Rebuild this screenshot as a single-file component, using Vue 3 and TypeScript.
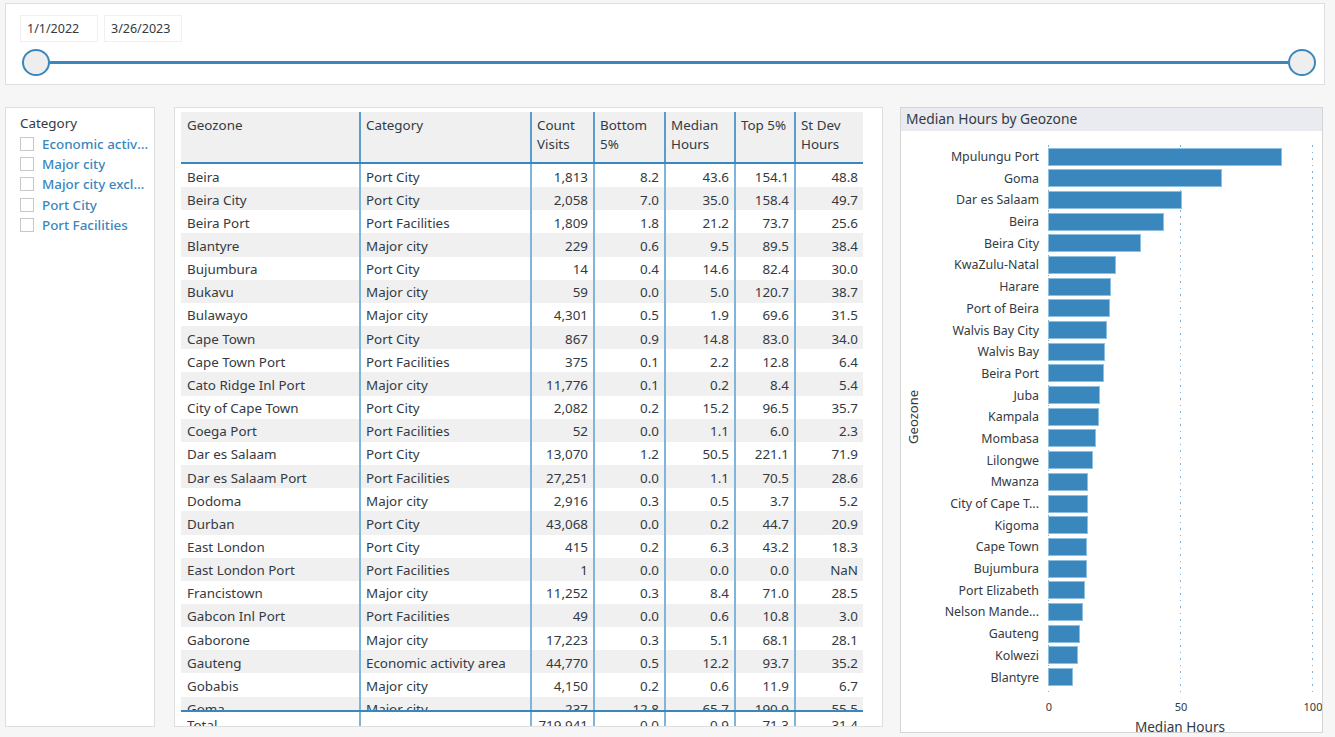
<script setup lang="ts">
const categories = ['Economic activity area', 'Major city', 'Major city excluding port', 'Port City', 'Port Facilities']

const columns = [
  { label: 'Geozone', num: false },
  { label: 'Category', num: false },
  { label: 'Count Visits', num: true },
  { label: 'Bottom 5%', num: true },
  { label: 'Median Hours', num: true },
  { label: 'Top 5%', num: true },
  { label: 'St Dev Hours', num: true },
]

const rows: string[][] = [
  ['Beira', 'Port City', '1,813', '8.2', '43.6', '154.1', '48.8'],
  ['Beira City', 'Port City', '2,058', '7.0', '35.0', '158.4', '49.7'],
  ['Beira Port', 'Port Facilities', '1,809', '1.8', '21.2', '73.7', '25.6'],
  ['Blantyre', 'Major city', '229', '0.6', '9.5', '89.5', '38.4'],
  ['Bujumbura', 'Port City', '14', '0.4', '14.6', '82.4', '30.0'],
  ['Bukavu', 'Major city', '59', '0.0', '5.0', '120.7', '38.7'],
  ['Bulawayo', 'Major city', '4,301', '0.5', '1.9', '69.6', '31.5'],
  ['Cape Town', 'Port City', '867', '0.9', '14.8', '83.0', '34.0'],
  ['Cape Town Port', 'Port Facilities', '375', '0.1', '2.2', '12.8', '6.4'],
  ['Cato Ridge Inl Port', 'Major city', '11,776', '0.1', '0.2', '8.4', '5.4'],
  ['City of Cape Town', 'Port City', '2,082', '0.2', '15.2', '96.5', '35.7'],
  ['Coega Port', 'Port Facilities', '52', '0.0', '1.1', '6.0', '2.3'],
  ['Dar es Salaam', 'Port City', '13,070', '1.2', '50.5', '221.1', '71.9'],
  ['Dar es Salaam Port', 'Port Facilities', '27,251', '0.0', '1.1', '70.5', '28.6'],
  ['Dodoma', 'Major city', '2,916', '0.3', '0.5', '3.7', '5.2'],
  ['Durban', 'Port City', '43,068', '0.0', '0.2', '44.7', '20.9'],
  ['East London', 'Port City', '415', '0.2', '6.3', '43.2', '18.3'],
  ['East London Port', 'Port Facilities', '1', '0.0', '0.0', '0.0', 'NaN'],
  ['Francistown', 'Major city', '11,252', '0.3', '8.4', '71.0', '28.5'],
  ['Gabcon Inl Port', 'Port Facilities', '49', '0.0', '0.6', '10.8', '3.0'],
  ['Gaborone', 'Major city', '17,223', '0.3', '5.1', '68.1', '28.1'],
  ['Gauteng', 'Economic activity area', '44,770', '0.5', '12.2', '93.7', '35.2'],
  ['Gobabis', 'Major city', '4,150', '0.2', '0.6', '11.9', '6.7'],
  ['Goma', 'Major city', '237', '12.8', '65.7', '190.9', '55.5'],
]

const totals = ['Total', '', '719,941', '0.0', '0.9', '71.3', '31.4']

// bar lengths are in hours, 100 h = 265px on the axis
const bars: [string, number][] = [
  ['Mpulungu Port', 88.4],
  ['Goma', 65.7],
  ['Dar es Salaam', 50.5],
  ['Beira', 43.6],
  ['Beira City', 35.0],
  ['KwaZulu-Natal', 25.5],
  ['Harare', 23.6],
  ['Port of Beira', 23.4],
  ['Walvis Bay City', 22.3],
  ['Walvis Bay', 21.4],
  ['Beira Port', 21.2],
  ['Juba', 19.6],
  ['Kampala', 19.2],
  ['Mombasa', 18.1],
  ['Lilongwe', 17.0],
  ['Mwanza', 15.2],
  ['City of Cape T...', 15.2],
  ['Kigoma', 15.0],
  ['Cape Town', 14.8],
  ['Bujumbura', 14.6],
  ['Port Elizabeth', 14.0],
  ['Nelson Mande...', 13.2],
  ['Gauteng', 12.2],
  ['Kolwezi', 11.4],
  ['Blantyre', 9.5],
]
</script>

<template>
  <div class="page">
    <section class="card slicer">
      <div class="dates">
        <div class="date">1/1/2022</div>
        <div class="date">3/26/2023</div>
      </div>
      <div class="track">
        <span class="handle"></span>
        <span class="line"></span>
        <span class="handle"></span>
      </div>
    </section>

    <div class="main">
      <section class="card filter">
        <div class="filter-title">Category</div>
        <label v-for="c in categories" :key="c" class="option">
          <span class="box"></span>
          <span class="option-text">{{ c }}</span>
        </label>
      </section>

      <section class="card matrix">
        <div class="grid-row head">
          <div v-for="col in columns" :key="col.label" class="cell">{{ col.label }}</div>
        </div>
        <div class="body">
          <div v-for="r in rows" :key="r[0]" class="grid-row item">
            <div v-for="(v, i) in r" :key="i" class="cell" :class="{ num: columns[i].num }">{{ v }}</div>
          </div>
        </div>
        <div class="grid-row foot">
          <div v-for="(v, i) in totals" :key="i" class="cell" :class="{ num: columns[i].num }">{{ v }}</div>
        </div>
      </section>

      <section class="card chart">
        <div class="chart-title">Median Hours by Geozone</div>
        <div class="chart-body">
          <div class="y-title"><span>Geozone</span></div>
          <div class="chart-main">
            <div class="plot">
              <div class="gridlines">
                <i></i><i></i><i></i>
              </div>
              <div v-for="b in bars" :key="b[0]" class="bar-row">
                <span class="bar-label">{{ b[0] }}</span>
                <span class="bar" :style="{ width: b[1] * 2.65 + 'px' }"></span>
              </div>
            </div>
            <div class="ticks">
              <span>0</span><span>50</span><span>100</span>
            </div>
            <div class="x-title">Median Hours</div>
          </div>
        </div>
      </section>
    </div>
  </div>
</template>

<style>
html,
body {
  margin: 0;
  background: #f6f6f6;
  overflow: hidden;
}
</style>

<style scoped>
.page {
  height: 737px;
  box-sizing: border-box;
  padding: 3px 10px 0 5px;
  font-family: 'Noto Sans', 'Open Sans', sans-serif;
  font-size: 13.4px;
  color: #333a42;
  overflow: hidden;
}

.card {
  box-sizing: border-box;
  background: #fff;
  border: 1px solid #dedede;
}

.slicer {
  height: 82px;
  padding: 11px 8px 0 14px;
}

.dates {
  display: flex;
  gap: 6px;
}

.date {
  box-sizing: border-box;
  width: 78px;
  height: 27px;
  padding-left: 6px;
  line-height: 26px;
  font-size: 12.5px;
  border: 1px solid #f0f0f0;
}

.track {
  display: flex;
  align-items: center;
  margin-top: 7px;
  padding-left: 2px;
}

.handle {
  box-sizing: border-box;
  flex: none;
  width: 28px;
  height: 27px;
  border-radius: 50%;
  border: 2px solid #3a87bd;
  background: #eeeeee;
}

.line {
  flex: 1;
  height: 3.5px;
  background: #3a87bd;
}

.main {
  display: flex;
  align-items: flex-start;
  margin-top: 22px;
}

.filter {
  width: 150px;
  height: 620px;
  padding: 6px 5px 0 14px;
}

.filter-title {
  line-height: 18px;
  margin-bottom: 2px;
}

.option {
  display: flex;
  align-items: center;
  gap: 8px;
  height: 20.2px;
}

.box {
  box-sizing: border-box;
  flex: none;
  width: 14px;
  height: 14px;
  border: 1px solid #c8c8c8;
}

.option-text {
  overflow: hidden;
  white-space: nowrap;
  text-overflow: ellipsis;
  color: #3a87bd;
  font-weight: 500;
}

.matrix {
  width: 709px;
  height: 620px;
  margin-left: 19px;
  padding: 4px 0 0 6px;
  display: flex;
  flex-direction: column;
  overflow: hidden;
}

.grid-row {
  display: grid;
  grid-template-columns: 180px 171px 63px 71px 70px 60px 67px;
  width: 682px;
}

.cell {
  box-sizing: border-box;
  padding: 0 5px;
  border-right: 2px solid #7fb5da;
  white-space: nowrap;
  overflow: hidden;
}

.cell:first-child {
  padding-left: 6px;
}

.cell:last-child {
  border-right: 0;
}

.num {
  text-align: right;
}

.head {
  flex: none;
  height: 52px;
  background: #f0f0f0;
  border-bottom: 2px solid #3a87bd;
  box-sizing: border-box;
  line-height: 19px;
}

.head .cell {
  padding-top: 4px;
  white-space: normal;
  border-right-color: #5a9ccb;
}

.body {
  flex: none;
  height: 546px;
  overflow: hidden;
}

.item {
  height: 23.17px;
  line-height: 23.17px;
}

.item .cell {
  padding-top: 1.5px;
}

.item:nth-child(even) {
  background: #f0f0f0;
}

.foot {
  flex: none;
  box-sizing: border-box;
  height: 18px;
  border-top: 2px solid #3a87bd;
  line-height: 26px;
}

.chart {
  width: 423px;
  height: 626px;
  margin-left: 17px;
  display: flex;
  flex-direction: column;
  overflow: hidden;
  border-color: #d4d4d4;
}

.chart-title {
  flex: none;
  height: 23px;
  line-height: 21px;
  padding-left: 5px;
  font-size: 13.8px;
  background: #e9ebf0;
}

.chart-body {
  flex: 1;
  display: flex;
  min-height: 0;
}

.y-title {
  flex: none;
  width: 23px;
  margin-right: 1px;
  display: flex;
  align-items: center;
  justify-content: center;
  padding-bottom: 30px;
  box-sizing: border-box;
}

.y-title span {
  writing-mode: vertical-rl;
  transform: rotate(180deg);
  font-size: 13px;
}

.chart-main {
  flex: 1;
  padding-top: 14px;
}

.plot {
  position: relative;
  padding-top: 0.7px;
  height: 551px;
  box-sizing: border-box;
}

.gridlines {
  position: absolute;
  inset: 0 auto 0 123px;
  width: 265px;
  display: flex;
  justify-content: space-between;
}

.gridlines i {
  width: 1px;
  background: repeating-linear-gradient(#7fb2d8 0 1.5px, transparent 1.5px 6.5px);
}

.bar-row {
  position: relative;
  display: flex;
  align-items: center;
  height: 21.7px;
}

.bar-label {
  flex: none;
  width: 114px;
  margin-right: 9px;
  text-align: right;
  white-space: nowrap;
  font-size: 12.4px;
}

.bar {
  box-sizing: border-box;
  height: 18px;
  background: #3a87bd;
  border: 1px solid #8fbfe0;
}

.ticks {
  display: flex;
  justify-content: space-between;
  width: 284px;
  margin: 2px 0 0 114px;
  font-size: 11px;
  line-height: 18px;
}

.ticks span {
  width: 20px;
  text-align: center;
}

.x-title {
  width: 266px;
  margin: 2px 0 0 122px;
  text-align: center;
  line-height: 18px;
  font-size: 13.6px;
}
</style>
